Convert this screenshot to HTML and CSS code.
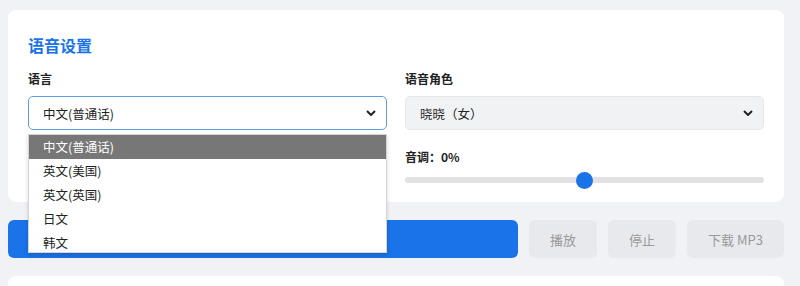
FILE: index.html
```html
<!DOCTYPE html>
<html lang="zh-CN">
<head>
    <meta charset="UTF-8">
    <meta name="viewport" content="width=device-width, initial-scale=1.0">
    <title>语音合成</title>
    <link rel="stylesheet" href="styles.css">
</head>
<body>
    <div class="page">
        <div class="card">
            <h3 class="card-title">语音设置</h3>
            <div class="settings">
                <div class="field">
                    <label>语言</label>
                    <div class="select focused">
                        <span>中文(普通话)</span>
                        <svg class="chevron" viewBox="0 0 10 6" width="10" height="6"><path d="M1 1l4 4 4-4" fill="none" stroke="#222" stroke-width="2"/></svg>
                    </div>
                    <ul class="dropdown">
                        <li class="active">中文(普通话)</li>
                        <li>英文(美国)</li>
                        <li>英文(英国)</li>
                        <li>日文</li>
                        <li>韩文</li>
                    </ul>
                </div>
                <div class="field">
                    <label>语音角色</label>
                    <div class="select">
                        <span>晓晓（女）</span>
                        <svg class="chevron" viewBox="0 0 10 6" width="10" height="6"><path d="M1 1l4 4 4-4" fill="none" stroke="#222" stroke-width="2"/></svg>
                    </div>
                </div>
                <div class="field"></div>
                <div class="field">
                    <label>音调：0%</label>
                    <div class="slider"><div class="thumb" style="left: 50%"></div></div>
                </div>
            </div>
        </div>

        <div class="actions">
            <button class="btn primary">生成语音</button>
            <button class="btn">播放</button>
            <button class="btn">停止</button>
            <button class="btn">下载 MP3</button>
        </div>

        <div class="card result"></div>
    </div>
</body>
</html>
```

FILE: styles.css
```css
* {
    box-sizing: border-box;
}
body {
    margin: 0;
    background: #f1f2f5;
    font-family: "Noto Sans CJK SC", "Liberation Sans", sans-serif;
    color: #222;
    overflow: hidden;
}
.page {
    padding: 10px 16px 0 8px;
}
.card {
    background: #fff;
    border-radius: 8px;
    padding: 20px 20px 14px;
}
.card-title {
    margin: 0 0 10px;
    font-size: 16px;
    line-height: 30px;
    color: #1a73e8;
    font-weight: bold;
}
.settings {
    display: grid;
    grid-template-columns: 1fr 1fr;
    column-gap: 18px;
    row-gap: 18px;
}
.field {
    position: relative;
}
.field label {
    display: block;
    font-size: 12px;
    font-weight: bold;
    line-height: 18px;
    margin-bottom: 8px;
}
.select {
    height: 34px;
    border: 1px solid #e6e7ea;
    border-radius: 5px;
    background: #f1f2f4;
    display: flex;
    align-items: center;
    justify-content: space-between;
    padding: 0 10px 0 14px;
    font-size: 12.5px;
}
.select.focused {
    background: #fff;
    border-color: #5e9de6;
}
.chevron {
    display: block;
}
.dropdown {
    position: absolute;
    top: 64px;
    left: 0;
    right: 0;
    z-index: 5;
    margin: 0;
    padding: 0;
    list-style: none;
    background: #fff;
    border: 1px solid #d5d5d5;
    box-shadow: 0 2px 4px rgba(0, 0, 0, 0.15);
    height: 119px;
    overflow: hidden;
    font-size: 12.5px;
}
.dropdown li {
    height: 24px;
    line-height: 24px;
    padding-left: 14px;
}
.dropdown li.active {
    background: #777;
    color: #fff;
}
.slider {
    position: relative;
    height: 6px;
    margin: 11px 0 5px;
    background: #e2e2e4;
    border-radius: 3px;
}
.thumb {
    position: absolute;
    top: 50%;
    width: 17px;
    height: 17px;
    margin: -8.5px 0 0 -8.5px;
    border-radius: 50%;
    background: #1a73e8;
}
.actions {
    display: flex;
    gap: 11px;
    margin: 18px 0;
}
.btn {
    height: 38px;
    border: none;
    border-radius: 6px;
    background: #e8e9ec;
    color: #999;
    font-family: inherit;
    font-size: 13px;
    padding: 0 21px;
}
.btn.primary {
    flex: 1;
    background: #1a73e8;
    color: #fff;
    font-size: 14px;
}
.result {
    height: 60px;
}
```
